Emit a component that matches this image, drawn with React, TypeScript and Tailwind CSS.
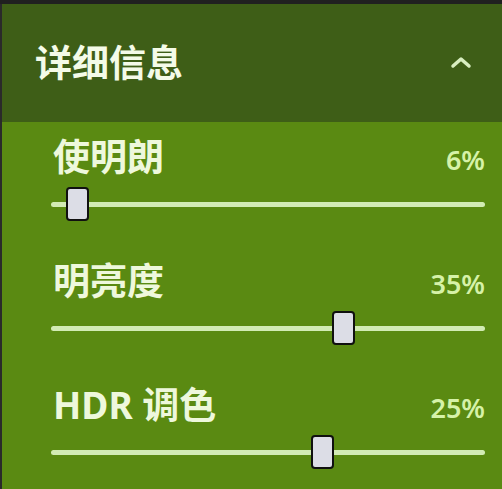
const sliders = [
  { label: '使明朗', value: '6%', left: 15 },
  { label: '明亮度', value: '35%', left: 281 },
  { label: 'HDR 调色', value: '25%', left: 260 },
];

const font = { fontFamily: '"Noto Sans", "Noto Sans CJK SC", sans-serif' };

function SliderRow({ label, value, left }: { label: string; value: string; left: number }) {
  return (
    <div className="flex flex-col">
      <div className="flex items-center justify-between pl-[51px] pr-[17px] h-[43px]">
        <span className="text-[37px] font-bold leading-none text-[#eef8dc]">{label}</span>
        <span className="text-[27px] font-semibold leading-none text-[#d6f2a8] pt-[6px]">{value}</span>
      </div>
      <div className="relative mt-[9px] ml-[49px] mr-[17px] h-[34px] flex items-center">
        <div className="h-[5px] w-full rounded-full bg-[#d2ebb4]" />
        <div
          className="absolute top-0 h-[34px] w-[23px] rounded-[4px] border-2 border-[#101010] bg-[#dcdde6]"
          style={{ left }}
        />
      </div>
    </div>
  );
}

export default function App() {
  return (
    <div className="w-[502px] h-[489px] overflow-hidden bg-[#1e1e1e] flex flex-col" style={font}>
      <div className="h-[4px] bg-[#202020]" />
      <div className="flex-1 flex flex-col border-l-2 border-[#2a2a2a]">
        <div className="h-[118px] bg-[#3e5e17] flex items-center justify-between pl-[33px] pr-[30px]">
          <span className="text-[37px] font-bold leading-none text-[#f4fbe8] pb-[2px]">详细信息</span>
          <svg width="22" height="14" viewBox="0 0 22 14" className="mb-[2px]">
            <path d="M3 11 L11 4 L19 11" fill="none" stroke="#d8eec0" strokeWidth="3.5" strokeLinecap="round" strokeLinejoin="round" />
          </svg>
        </div>
        <div className="flex-1 bg-[#5a8a12] flex flex-col gap-[38px] pt-[13px]">
          {sliders.map((s) => (
            <SliderRow key={s.label} {...s} />
          ))}
        </div>
      </div>
    </div>
  );
}
